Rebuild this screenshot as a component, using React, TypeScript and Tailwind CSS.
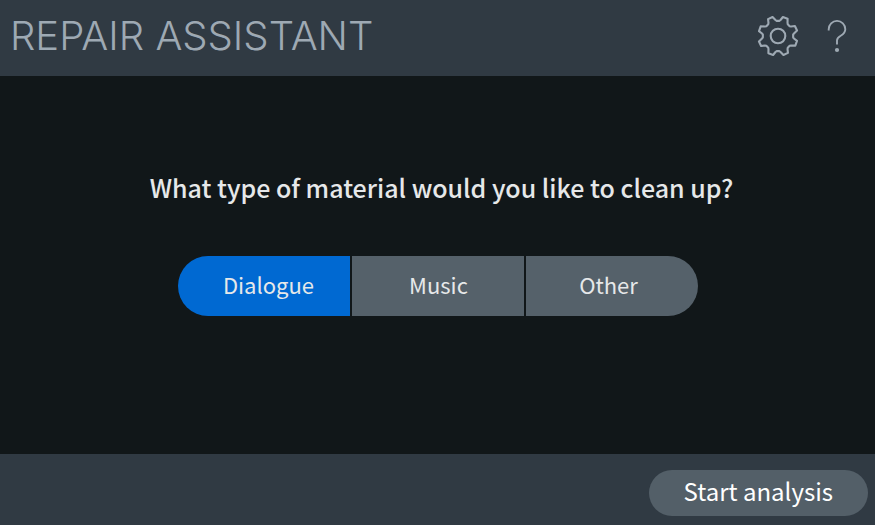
import { useState } from 'react'
import type { FormEvent } from 'react'

interface Material {
  id: string
  label: string
  className: string
}

const materials: Material[] = [
  { id: 'dialogue', label: 'Dialogue', className: 'rounded-l-full pl-2.5' },
  { id: 'music', label: 'Music', className: 'pl-0.5' },
  { id: 'other', label: 'Other', className: 'rounded-r-full pr-1.5' },
]

// Eight teeth, with a valley at twelve o'clock
const gearPoints = Array.from({ length: 8 }, (_, i) =>
  [
    [15.2, -5],
    [15.2, 5],
    [16.2, 9],
    [19.6, 14.5],
    [19.8, 29],
    [16.2, 36],
  ].map(([r, deg]) => {
    const a = ((i * 45 + deg) * Math.PI) / 180
    return `${(21 + r * Math.sin(a)).toFixed(2)},${(21 - r * Math.cos(a)).toFixed(2)}`
  }).join(' ')
).join(' ')

function GearIcon() {
  return (
    <svg className="h-[42px] w-[42px]" viewBox="0 0 42 42" fill="none" stroke="currentColor" strokeWidth={2.1} strokeLinejoin="round" aria-hidden="true">
      <polygon points={gearPoints} />
      <circle cx="21" cy="21" r="7.3" />
    </svg>
  )
}

function HelpIcon() {
  return (
    <svg className="h-[34px] w-5" viewBox="0 0 20 34" fill="none" stroke="currentColor" strokeWidth={1.9} aria-hidden="true">
      <path d="M1.7 11.5V10.2A8.3 8.3 0 0 1 18.3 10.2C18.3 17.5 10 16 10 21.5V25.5" />
      <circle cx="10" cy="31" r="2.1" fill="currentColor" stroke="none" />
    </svg>
  )
}

export default function App() {
  const [material, setMaterial] = useState('dialogue')

  const handleSubmit = (e: FormEvent) => e.preventDefault()

  return (
    <form
      onSubmit={handleSubmit}
      className="flex min-h-screen flex-col bg-[#111719] font-['Noto_Sans_CJK_SC',sans-serif] text-[#e6e8e9]"
    >
      <header className="flex h-19 items-center justify-between bg-[#303a43] pr-7 pb-1 pl-2.5 text-[#9ea9b3]">
        <h1 className="font-['Inter',sans-serif] text-[40px] leading-none font-light">REPAIR ASSISTANT</h1>
        <div className="flex items-center gap-7">
          <button type="button" aria-label="Settings">
            <GearIcon />
          </button>
          <button type="button" aria-label="Help">
            <HelpIcon />
          </button>
        </div>
      </header>

      <main className="flex flex-1 flex-col items-center justify-center px-4 pb-[45px]">
        <h2 id="material-label" className="mb-[51px] pl-2 text-center text-[25px] leading-9 font-medium">
          What type of material would you like to clean up?
        </h2>
        <div role="group" aria-labelledby="material-label" className="grid w-full max-w-[520px] grid-cols-3 gap-0.5">
          {materials.map((m) => (
            <button
              key={m.id}
              type="button"
              aria-pressed={material === m.id}
              onClick={() => setMaterial(m.id)}
              className={`h-15 pb-1 text-[22px] leading-8 ${m.className} ${
                material === m.id ? 'bg-[#0069d2]' : 'bg-[#55616a]'
              }`}
            >
              {m.label}
            </button>
          ))}
        </div>
      </main>

      <footer className="flex justify-end bg-[#303a43] pt-4 pr-[7px] pb-[9px]">
        <button type="submit" className="h-[46px] rounded-full bg-[#535f68] px-[35px] pb-1 text-2xl leading-8 text-white">
          Start analysis
        </button>
      </footer>
    </form>
  )
}
